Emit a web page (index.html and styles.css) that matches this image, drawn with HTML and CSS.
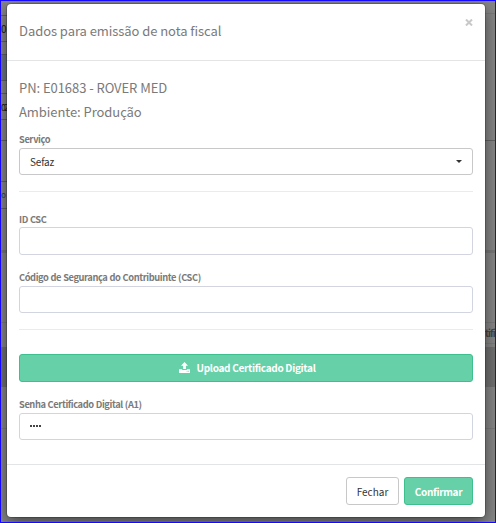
FILE: index.html
```html
<!DOCTYPE html>
<html lang="pt-BR">
<head>
<meta charset="utf-8">
<title>Dados para emissão de nota fiscal</title>
<link rel="stylesheet" href="styles.css">
</head>
<body>
<div class="screen">
  <div class="page" aria-hidden="true">
    <div class="strip strip-left">
      <div class="row h14"></div>
      <div class="row h26"><span>0</span></div>
      <div class="row h13"></div>
      <div class="row h26 blue"></div>
      <div class="row h13"></div>
      <div class="row h26"><span class="pair">02</span></div>
      <div class="row h21"></div>
      <div class="row h41"></div>
      <div class="row h27"><span class="link">o</span></div>
      <div class="row h44 thick"></div>
      <div class="row h70 faint"></div>
      <div class="row h24 none"></div>
      <div class="row h40 dark none"></div>
      <div class="row h42 faint"></div>
    </div>
    <div class="strip strip-right">
      <div class="row h13 faint"></div>
      <div class="row h127"></div>
      <div class="row h112 thick"></div>
      <div class="row h70 faint"></div>
      <div class="row h21 faint"><span class="bold">tifi</span></div>
      <div class="row h3 none"></div>
      <div class="row h40 dark none"></div>
      <div class="row h42 faint"></div>
    </div>
  </div>
  <div class="modal" role="dialog">
    <div class="header">
      <h4 class="title">Dados para emissão de nota fiscal</h4>
      <button class="close" aria-label="Fechar janela"><svg width="8" height="7" viewBox="0 0 8 7"><path d="M1 .5 7 6.5M7 .5 1 6.5" fill="none" stroke="#c8c8c8" stroke-width="2"/></svg></button>
    </div>
    <div class="body">
      <p class="info pn">PN: E01683 - ROVER MED</p>
      <p class="info env">Ambiente: Produção</p>
      <div class="label l-serv">Serviço</div>
      <div class="control select"><span>Sefaz</span><svg width="6" height="3" viewBox="0 0 6 3"><path d="M0 0h6L3 3z" fill="#333"/></svg></div>
      <div class="rule"></div>
      <div class="label l-id">ID CSC</div>
      <div class="control tall"></div>
      <div class="label l-csc">Código de Segurança do Contribuinte (CSC)</div>
      <div class="control"></div>
      <div class="rule rule-2"></div>
      <button class="btn green upload"><svg width="11" height="11" viewBox="0 0 11 11"><path d="M5.500 0 9 3.700H6.900V7H4.100V3.700H2zM0 7.200h3.200V8h4.600v-.8H11V11H0z" fill="#fff"/><path d="M7.700 9.300h.8M9.200 9.300h.8" stroke="#66d0a8" stroke-width=".8"/></svg><span>Upload Certificado Digital</span></button>
      <div class="label l-pass">Senha Certificado Digital (A1)</div>
      <div class="control"><span class="dots"><i></i><i></i><i></i><i></i></span></div>
    </div>
    <div class="footer">
      <button class="btn plain"><span>Fechar</span></button>
      <button class="btn green confirm"><span>Confirmar</span></button>
    </div>
  </div>
</div>
</body>
</html>
```
FILE: styles.css
```css
* { box-sizing: border-box; }
body { margin: 0; font-family: "Noto Sans CJK SC", "Liberation Sans", sans-serif; font-size: 10px; color: #7a7a7a; }
button { font: inherit; padding: 0; margin: 0; }
.screen { position: relative; width: 496px; height: 523px; border: 1px solid #1408ff; background: #868686; overflow: hidden; padding: 3px 10px 5px 6px; }
.page { position: absolute; inset: 0; display: flex; justify-content: space-between; }
.strip { display: flex; flex-direction: column; }
.strip-left { width: 6px; }
.strip-right { width: 10px; }
.row { flex: none; display: flex; align-items: center; border-bottom: 1px solid #626262; color: #1c1c1c; line-height: 12px; white-space: nowrap; }
.faint { border-bottom-color: #7a7a7a; }
.thick { border-bottom: 3px solid #777; }
.none { border-bottom: 0; }
.blue { background: #6d7680; }
.dark { background: #707070; }
.pair { font-size: 8.5px; letter-spacing: -1.6px; }
.link { color: #244766; font-size: 8px; }
.bold { font-size: 9.5px; font-weight: 700; color: #444; letter-spacing: -.9px; }
.h3 { height: 3px; }
.h13 { height: 13px; }
.h14 { height: 15px; }
.h21 { height: 21px; }
.h24 { height: 24px; }
.h26 { height: 26px; }
.h27 { height: 27px; }
.h40 { height: 40px; }
.h41 { height: 41px; }
.h42 { height: 42px; }
.h44 { height: 44px; }
.h70 { height: 70px; }
.h112 { height: 112px; }
.h127 { height: 127px; }
.modal { position: relative; width: 478px; height: 513px; border-radius: 4px; background: #fff; box-shadow: 0 0 0 1px rgba(0,0,0,.2), 0 5px 15px rgba(0,0,0,.5); }
.header { height: 57px; padding: 15px 12px 0; border-bottom: 1px solid #e2e4e6; display: flex; justify-content: space-between; align-items: flex-start; }
.title { margin: 0; font-size: 13px; font-weight: 400; line-height: 24px; white-space: nowrap; letter-spacing: -.06px; }
.close { border: 0; background: none; width: 8px; height: 7px; display: flex; }
.body { height: 403px; padding: 15px 12px 0; }
.info { margin: 0; font-size: 13px; line-height: 24px; white-space: nowrap; letter-spacing: -.06px; }
.label { font-size: 9.3px; font-weight: 700; line-height: 14px; white-space: nowrap; letter-spacing: -.42px; word-spacing: .4px; }
.l-serv { margin: 8px 0 2px; }
.control { height: 27px; border: 1px solid #d2d5df; border-radius: 3px; padding: 0 10px; display: flex; align-items: center; }
.select { border-color: #c8c8c8; justify-content: space-between; color: #333; letter-spacing: -.15px; }
.tall { height: 28px; }
.rule { height: 1px; background: #ebebeb; margin: 16px 0 20px; }
.l-id { margin-bottom: 1px; }
.l-csc { margin: 15px 0 2px; }
.rule-2 { margin-bottom: 24px; }
.btn { height: 28px; border: 1px solid #c8c8c8; border-radius: 3px; background: #fff; color: #333; display: flex; align-items: center; justify-content: center; white-space: nowrap; }
.green { background: #66d0a8; border-color: #3dc08d; color: #fff; font-weight: 700; letter-spacing: -.3px; }
.upload { width: 100%; gap: 6px; padding: 0 0 1px 3px; }
.l-pass { margin: 15px 0 2px; }
.dots { display: flex; gap: 1px; margin-top: -1px; }
.dots i { width: 2px; height: 2px; background: #444; }
.footer { height: 53px; border-top: 1px solid #e2e4e6; padding: 12px; display: flex; justify-content: flex-end; gap: 5px; }
.plain { width: 53px; }
.confirm { width: 69px; }
```
